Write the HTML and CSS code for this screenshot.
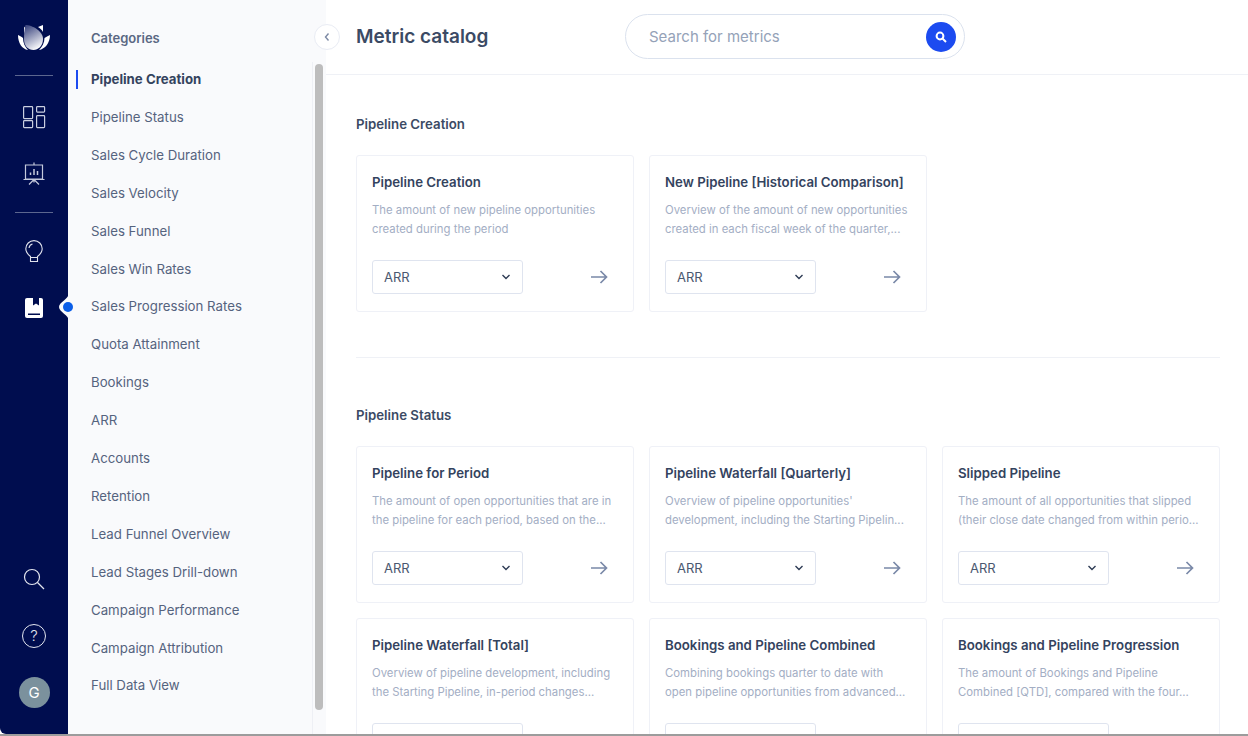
FILE: index.html
```html
<!DOCTYPE html>
<html lang="en">
<head>
    <meta charset="UTF-8">
    <title>Metric catalog</title>
    <link rel="stylesheet" href="styles.css">
</head>
<body>
<div class="app">
    <nav class="rail">
        <div class="rail-logo">
            <svg width="36" height="28" viewBox="0 0 36 28">
                <defs>
                    <linearGradient id="petal" x1="0.2" y1="0" x2="0.65" y2="1">
                        <stop offset="0" stop-color="#3d4780"/>
                        <stop offset="1" stop-color="#ffffff"/>
                    </linearGradient>
                </defs>
                <path d="M2 11C4 12 6 13 7 14C7 19 9 23 12 26C6 25 2 19 2 11Z" fill="#fff"/>
                <path d="M34 11C32 12 30 13 28.500 14C28.500 19 26 23 23 26C29 25 34 19 34 11Z" fill="#fff"/>
                <path d="M8 2.500V10L10 5Z" fill="#fff"/>
                <path d="M27 1V8C26 6 24 4 22 3Z" fill="#fff"/>
                <path d="M9.500 1C16 1 27 7 27 15C27 22 22 26 17.500 26C12 26 8 22 8 15C8 9 8.500 5 9.500 1Z" fill="url(#petal)"/>
            </svg>
        </div>
        <hr class="rail-line">
        <div class="rail-group top-group">
            <div class="rail-item">
                <svg width="24" height="24" viewBox="0 0 24 24" fill="none" stroke="#c9cee0" stroke-width="1.200">
                    <rect x="1.600" y="1.600" width="9" height="12" rx="0.800"/>
                    <rect x="1.600" y="15.600" width="9" height="7" rx="0.800"/>
                    <rect x="14.600" y="1.600" width="8" height="5.500" rx="0.800"/>
                    <rect x="14.600" y="10.600" width="8" height="12" rx="0.800"/>
                </svg>
            </div>
            <div class="rail-item">
                <svg width="24" height="24" viewBox="0 0 24 24" fill="none" stroke="#c4c9dc" stroke-width="1.200">
                    <path d="M12 0.500V3M3.500 3H20.500V17H3.500ZM1.500 17.500H22.500M12 18V20.500M11.500 18L7 22.500M12.500 18L17 22.500"/>
                    <path d="M8.500 13V10.500M12 13V7M15.500 13V9" stroke-width="1.500"/>
                </svg>
            </div>
        </div>
        <hr class="rail-line">
        <div class="rail-group">
            <div class="rail-item">
                <svg width="20" height="24" viewBox="0 0 20 24" fill="none" stroke="#dfe2ec" stroke-width="1.100">
                    <path d="M6.500 17.500C4 15.500 1.800 13.500 1.800 9.800A8.200 8.200 0 0 1 18.200 9.800C18.200 13.500 16 15.500 13.500 17.500V22.500H6.500ZM6.500 18.500H13.500"/>
                    <path d="M5 9C5.300 7 6.500 5.500 8.500 5"/>
                </svg>
            </div>
            <div class="rail-item">
                <svg width="20" height="22" viewBox="0 0 20 22">
                    <path d="M3 1H17A2 2 0 0 1 19 3V19A2 2 0 0 1 17 21H3A2 2 0 0 1 1 19V3A2 2 0 0 1 3 1Z" fill="#fff"/>
                    <path d="M9 1H15V8.500L12 6.500L9 8.500Z" fill="#000d4f"/>
                    <path d="M4 16.500H16V18H4Z" fill="#000d4f"/>
                </svg>
            </div>
        </div>
        <div class="rail-group bottom-group">
            <div class="rail-item">
                <svg width="24" height="24" viewBox="0 0 24 24" fill="none" stroke="#e3e6ef" stroke-width="1.200">
                    <circle cx="10" cy="10" r="7.500"/>
                    <path d="M15.500 15.500L22 22"/>
                </svg>
            </div>
            <div class="rail-item"><span class="help-icon">?</span></div>
            <div class="rail-item"><span class="avatar">G</span></div>
        </div>
        <svg class="rail-notch" width="20" height="28" viewBox="0 0 20 28">
            <path d="M10 0C10 6 0 9 0 14C0 19 10 22 10 28H20V0Z" fill="#f9fafc"/>
            <circle cx="9" cy="14" r="5" fill="#0b5ee8"/>
        </svg>
    </nav>

    <aside class="sidebar">
        <div class="category-col">
            <div class="category-head">Categories</div>
            <ul class="category-list">
                <li class="active">Pipeline Creation</li>
                <li>Pipeline Status</li>
                <li>Sales Cycle Duration</li>
                <li>Sales Velocity</li>
                <li>Sales Funnel</li>
                <li>Sales Win Rates</li>
                <li>Sales Progression Rates</li>
                <li>Quota Attainment</li>
                <li>Bookings</li>
                <li>ARR</li>
                <li>Accounts</li>
                <li>Retention</li>
                <li>Lead Funnel Overview</li>
                <li>Lead Stages Drill-down</li>
                <li>Campaign Performance</li>
                <li>Campaign Attribution</li>
                <li>Full Data View</li>
            </ul>
        </div>
        <div class="scroll-track"><div class="scroll-thumb"></div></div>
    </aside>

    <main class="main">
        <button class="collapse-btn">
            <svg width="8" height="10" viewBox="0 0 8 10" fill="none" stroke="#7d8aa5" stroke-width="1.400"><path d="M5.500 1.500L2.500 5L5.500 8.500"/></svg>
        </button>
        <header class="topbar">
            <h1>Metric catalog</h1>
            <div class="search">
                <span class="search-text">Search for metrics</span>
                <span class="search-btn">
                    <svg width="12" height="12" viewBox="0 0 12 12" fill="none" stroke="#fff" stroke-width="2"><circle cx="5" cy="5" r="3.400"/><path d="M7.500 7.500L11 11"/></svg>
                </span>
            </div>
        </header>

        <div class="content">
            <section class="section first">
                <h2>Pipeline Creation</h2>
                <div class="card-grid">
                    <div class="card">
                        <h3>Pipeline Creation</h3>
                        <p>The amount of new pipeline opportunities<br>created during the period</p>
                        <div class="card-foot">
                            <div class="select">ARR<svg width="10" height="6" viewBox="0 0 10 6" fill="none" stroke="#2e3c55" stroke-width="1.400"><path d="M1.500 1L5 4.500L8.500 1"/></svg></div>
                            <svg class="arrow" width="18" height="14" viewBox="0 0 18 14" fill="none" stroke="#7a89a8" stroke-width="1.700"><path d="M1 7H16M10.500 1L16.500 7L10.500 13"/></svg>
                        </div>
                    </div>
                    <div class="card">
                        <h3>New Pipeline [Historical Comparison]</h3>
                        <p>Overview of the amount of new opportunities<br>created in each fiscal week of the quarter,...</p>
                        <div class="card-foot">
                            <div class="select">ARR<svg width="10" height="6" viewBox="0 0 10 6" fill="none" stroke="#2e3c55" stroke-width="1.400"><path d="M1.500 1L5 4.500L8.500 1"/></svg></div>
                            <svg class="arrow" width="18" height="14" viewBox="0 0 18 14" fill="none" stroke="#7a89a8" stroke-width="1.700"><path d="M1 7H16M10.500 1L16.500 7L10.500 13"/></svg>
                        </div>
                    </div>
                </div>
            </section>

            <section class="section">
                <h2>Pipeline Status</h2>
                <div class="card-grid">
                    <div class="card">
                        <h3>Pipeline for Period</h3>
                        <p>The amount of open opportunities that are in<br>the pipeline for each period, based on the...</p>
                        <div class="card-foot">
                            <div class="select">ARR<svg width="10" height="6" viewBox="0 0 10 6" fill="none" stroke="#2e3c55" stroke-width="1.400"><path d="M1.500 1L5 4.500L8.500 1"/></svg></div>
                            <svg class="arrow" width="18" height="14" viewBox="0 0 18 14" fill="none" stroke="#7a89a8" stroke-width="1.700"><path d="M1 7H16M10.500 1L16.500 7L10.500 13"/></svg>
                        </div>
                    </div>
                    <div class="card">
                        <h3>Pipeline Waterfall [Quarterly]</h3>
                        <p>Overview of pipeline opportunities'<br>development, including the Starting Pipelin...</p>
                        <div class="card-foot">
                            <div class="select">ARR<svg width="10" height="6" viewBox="0 0 10 6" fill="none" stroke="#2e3c55" stroke-width="1.400"><path d="M1.500 1L5 4.500L8.500 1"/></svg></div>
                            <svg class="arrow" width="18" height="14" viewBox="0 0 18 14" fill="none" stroke="#7a89a8" stroke-width="1.700"><path d="M1 7H16M10.500 1L16.500 7L10.500 13"/></svg>
                        </div>
                    </div>
                    <div class="card">
                        <h3>Slipped Pipeline</h3>
                        <p>The amount of all opportunities that slipped<br>(their close date changed from within perio...</p>
                        <div class="card-foot">
                            <div class="select">ARR<svg width="10" height="6" viewBox="0 0 10 6" fill="none" stroke="#2e3c55" stroke-width="1.400"><path d="M1.500 1L5 4.500L8.500 1"/></svg></div>
                            <svg class="arrow" width="18" height="14" viewBox="0 0 18 14" fill="none" stroke="#7a89a8" stroke-width="1.700"><path d="M1 7H16M10.500 1L16.500 7L10.500 13"/></svg>
                        </div>
                    </div>
                    <div class="card">
                        <h3>Pipeline Waterfall [Total]</h3>
                        <p>Overview of pipeline development, including<br>the Starting Pipeline, in-period changes...</p>
                        <div class="card-foot">
                            <div class="select"></div>
                        </div>
                    </div>
                    <div class="card">
                        <h3>Bookings and Pipeline Combined</h3>
                        <p>Combining bookings quarter to date with<br>open pipeline opportunities from advanced...</p>
                        <div class="card-foot">
                            <div class="select"></div>
                        </div>
                    </div>
                    <div class="card">
                        <h3>Bookings and Pipeline Progression</h3>
                        <p>The amount of Bookings and Pipeline<br>Combined [QTD], compared with the four...</p>
                        <div class="card-foot">
                            <div class="select"></div>
                        </div>
                    </div>
                </div>
            </section>
        </div>
    </main>
</div>
</body>
</html>
```

FILE: styles.css
```css
* {
    box-sizing: border-box;
}
html, body {
    height: 100%;
    margin: 0;
    overflow: hidden;
}
body {
    font-family: Inter, "Noto Sans", sans-serif;
    background: #9c9c9c;
    color: #34435e;
}
.app {
    display: flex;
    height: 734px;
    background: #fff;
    overflow: hidden;
}

/* left rail */
.rail {
    position: relative;
    flex: 0 0 68px;
    display: flex;
    flex-direction: column;
    background: #000d4f;
    border-bottom-left-radius: 6px;
}
.rail-logo {
    height: 75px;
    display: flex;
    align-items: center;
    justify-content: center;
}
.rail-line {
    width: 38px;
    height: 1px;
    margin: 0 auto;
    border: none;
    background: #5c668f;
}
.rail-group {
    display: flex;
    flex-direction: column;
    padding-top: 9px;
}
.top-group {
    padding-top: 12px;
    padding-bottom: 10px;
}
.bottom-group {
    margin-top: auto;
    padding-bottom: 13px;
}
.rail-item {
    height: 57px;
    display: flex;
    align-items: center;
    justify-content: center;
}
.help-icon {
    width: 24px;
    height: 24px;
    display: flex;
    align-items: center;
    justify-content: center;
    border: 1px solid #e3e6ef;
    border-radius: 50%;
    font-size: 15px;
    font-weight: 300;
    color: #e3e6ef;
}
.avatar {
    width: 31px;
    height: 31px;
    display: flex;
    align-items: center;
    justify-content: center;
    border-radius: 50%;
    background: #7b919d;
    color: #fff;
    font-size: 15px;
}
.rail-notch {
    position: absolute;
    left: 59px;
    top: 293px;
}

/* categories */
.sidebar {
    flex: 0 0 257px;
    display: flex;
    background: #f9fafc;
}
.category-col {
    flex: 0 0 244px;
}
.category-head {
    padding: 30px 0 0 23px;
    height: 60.150px;
    font-size: 13px;
    line-height: 17px;
    font-weight: 600;
    color: #5a6883;
}
.category-list {
    list-style: none;
    margin: 0;
    padding: 0 0 0 23px;
}
.category-list li {
    position: relative;
    height: 37.900px;
    line-height: 38px;
    font-size: 13.250px;
    color: #55637e;
}
.category-list li.active {
    font-weight: 700;
    color: #34435e;
}
.category-list li.active::before {
    content: "";
    position: absolute;
    left: -15px;
    top: 10px;
    width: 2px;
    height: 19px;
    background: #1c4bf0;
}
.scroll-track {
    flex: 1;
    margin-top: 62px;
    padding: 2px 3px 0 2px;
    border-left: 1px solid #eef0f5;
}
.scroll-thumb {
    width: 8px;
    height: 646px;
    border-radius: 4px;
    background: #bdbdbd;
}

/* main */
.main {
    position: relative;
    flex: 1;
    min-width: 0;
}
.collapse-btn {
    position: absolute;
    left: -12px;
    top: 24px;
    width: 26px;
    height: 26px;
    padding: 0;
    display: flex;
    align-items: center;
    justify-content: center;
    border: 1px solid #e9ecf4;
    border-radius: 50%;
    background: #fff;
}
.topbar {
    height: 75px;
    display: flex;
    align-items: center;
    padding: 0 0 1px 30px;
    border-bottom: 1px solid #eff1f6;
}
.topbar h1 {
    flex: 0 0 269px;
    margin: 0;
    font-size: 19px;
    font-weight: 600;
    color: #3b4a64;
}
.search {
    width: 340px;
    height: 45px;
    display: flex;
    align-items: center;
    justify-content: space-between;
    padding: 0 8px 0 23px;
    border: 1px solid #dbe2ee;
    border-radius: 23px;
}
.search-text {
    font-size: 15px;
    color: #95a2b8;
}
.search-btn {
    width: 30px;
    height: 30px;
    display: flex;
    align-items: center;
    justify-content: center;
    border-radius: 50%;
    background: #1c4bf0;
}
.content {
    padding: 0 28px 0 30px;
}
.section {
    padding-top: 49px;
}
.section.first {
    padding-top: 41px;
    padding-bottom: 45px;
    border-bottom: 1px solid #eff1f6;
}
.section h2 {
    margin: 0 0 22px;
    font-size: 13.250px;
    line-height: 17px;
    font-weight: 600;
    color: #3b4a64;
}
.card-grid {
    display: grid;
    grid-template-columns: repeat(3, 278px);
    gap: 15px;
}
.card {
    height: 157px;
    padding: 18px 15px 0 15px;
    border: 1px solid #eff1f7;
    border-radius: 3px;
    background: #fff;
}
.card h3 {
    margin: 0;
    font-size: 13.250px;
    line-height: 17px;
    font-weight: 600;
    color: #34435e;
}
.card p {
    margin: 10px 0 0;
    font-size: 11.350px;
    line-height: 19px;
    color: #a3aec4;
    white-space: nowrap;
}
.card-foot {
    display: flex;
    align-items: center;
    justify-content: space-between;
    margin-top: 21px;
    padding-right: 10px;
}
.select {
    width: 151px;
    height: 34px;
    display: flex;
    align-items: center;
    justify-content: space-between;
    padding: 0 11px;
    border: 1px solid #dfe4ef;
    border-radius: 3px;
    font-size: 13px;
    color: #4b5870;
}
```
